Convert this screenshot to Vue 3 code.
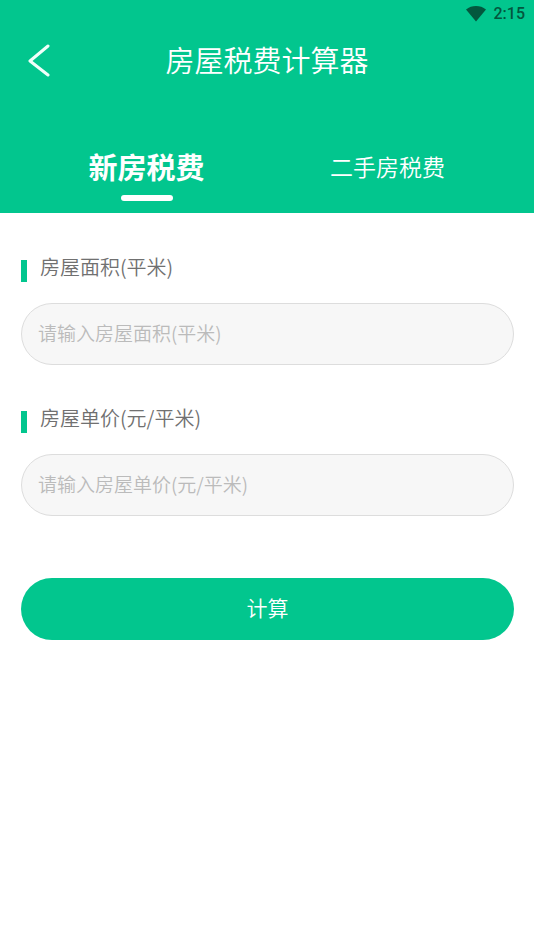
<script setup>
import { ref } from 'vue'

const tabs = [
  { id: 'new', label: '新房税费' },
  { id: 'used', label: '二手房税费' }
]
const activeTab = ref('new')
const area = ref('')
const price = ref('')
</script>

<template>
  <div class="page">
    <header class="header">
      <div class="status">
        <svg class="wifi" viewBox="0 0 20 16" aria-hidden="true">
          <path d="M0 3.4C5.8-1.1 14.2-1.1 20 3.4L10 15.4Z" />
        </svg>
        <span>2:15</span>
      </div>
      <div class="titlebar">
        <button class="back" type="button" aria-label="返回">
          <svg viewBox="0 0 22 34" aria-hidden="true">
            <path d="M20 3L2 18L20 32" />
          </svg>
        </button>
        <h1>房屋税费计算器</h1>
      </div>
      <nav class="tabs">
        <button
          v-for="tab in tabs"
          :key="tab.id"
          type="button"
          class="tab"
          :class="{ active: tab.id === activeTab }"
          @click="activeTab = tab.id"
        >{{ tab.label }}</button>
      </nav>
    </header>

    <form class="form" @submit.prevent>
      <div class="field">
        <label for="area">房屋面积(平米)</label>
        <input id="area" v-model="area" type="text" inputmode="decimal" placeholder="请输入房屋面积(平米)" />
      </div>
      <div class="field">
        <label for="price">房屋单价(元/平米)</label>
        <input id="price" v-model="price" type="text" inputmode="decimal" placeholder="请输入房屋单价(元/平米)" />
      </div>
      <button class="submit" type="submit">计算</button>
    </form>
  </div>
</template>

<style>
body {
  background: #fff;
}
</style>

<style scoped>
.page {
  font-family: "Noto Sans CJK SC", sans-serif;
  font-weight: 350;
}

.page * {
  box-sizing: border-box;
}

button,
input {
  font-family: inherit;
  font-weight: inherit;
}

.header {
  background: #02c68e;
  color: #fff;
}

.status {
  display: flex;
  justify-content: flex-end;
  align-items: center;
  gap: 8px;
  height: 28px;
  padding: 0 9px;
  color: #03573e;
  font: 500 16px/28px Roboto, sans-serif;
}

.wifi {
  width: 20px;
  height: 16px;
  fill: currentColor;
}

.titlebar {
  display: grid;
  grid-template-columns: 78px 1fr 78px;
  height: 64px;
}

.back {
  display: flex;
  align-items: center;
  height: 64px;
  padding: 0 28px;
  border: 0;
  background: none;
}

.back svg {
  flex: none;
  width: 22px;
  height: 34px;
  fill: none;
  stroke: #f0fffa;
  stroke-width: 3;
  stroke-linecap: round;
  stroke-linejoin: round;
}

h1 {
  margin: 0;
  text-align: center;
  font-size: 29px;
  font-weight: inherit;
  line-height: 62px;
}

.tabs {
  display: grid;
  grid-template-columns: 1fr 1fr;
  height: 121px;
  padding: 45px 26px 12px;
}

.tab {
  display: flex;
  flex-direction: column;
  align-items: center;
  padding: 0;
  border: 0;
  background: none;
  color: #fff;
  font-size: 23px;
  line-height: 58px;
}

.tab.active {
  font-size: 29px;
  font-weight: 700;
}

.tab.active::after {
  content: "";
  width: 52px;
  height: 6px;
  border-radius: 3px;
  background: #fff;
}

.form {
  display: flex;
  flex-direction: column;
  padding: 40px 20px 40px 21px;
}

.field {
  display: flex;
  flex-direction: column;
  gap: 21px;
  margin-bottom: 39px;
}

label {
  display: flex;
  align-items: flex-start;
  gap: 13px;
  color: #707070;
  font-size: 20px;
  line-height: 28px;
}

label::before {
  content: "";
  width: 6px;
  height: 22px;
  margin-top: 7px;
  background: #02c68e;
}

input {
  width: 100%;
  height: 62px;
  padding: 0 16px 4px;
  border: 1px solid #ddd;
  border-radius: 31px;
  background: #f7f7f7;
  color: #666;
  font-size: 19px;
}

input::placeholder {
  color: #bbb;
  opacity: 1;
}

.submit {
  height: 62px;
  margin-top: 23px;
  padding: 0 0 4px;
  border: 0;
  border-radius: 31px;
  background: #02c68e;
  color: #fff;
  font-size: 21px;
}
</style>
